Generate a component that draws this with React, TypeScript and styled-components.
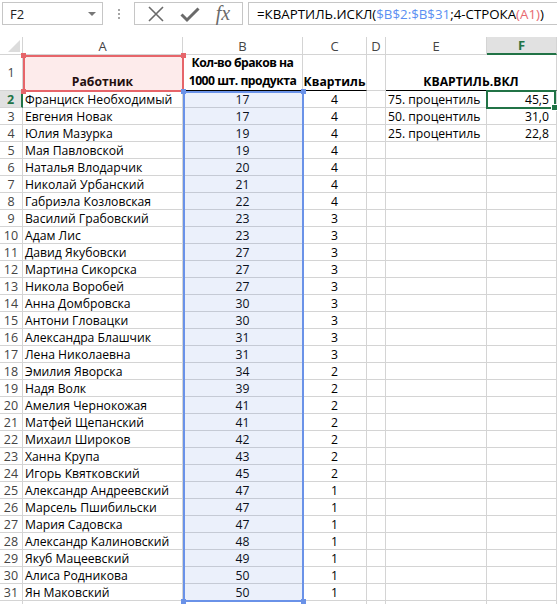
import styled, { createGlobalStyle } from "styled-components";

const GlobalStyle = createGlobalStyle`
  html, body {
    margin: 0;
    padding: 0;
    background: #ffffff;
    overflow: hidden;
  }
  body {
    font-family: "Open Sans", "Liberation Sans", sans-serif;
    color: #000;
  }
`;

const COLS = [23, 160, 120, 64, 19, 101, 70];
const GRID = "#d4d4d4";
const GREEN = "#217346";

type Row = [string, number, number];

const rows: Row[] = [
  ["Франциск Необходимый", 17, 4],
  ["Евгения Новак", 17, 4],
  ["Юлия Мазурка", 19, 4],
  ["Мая Павловской", 19, 4],
  ["Наталья Влодарчик", 20, 4],
  ["Николай Урбанский", 21, 4],
  ["Габриэла Козловская", 22, 4],
  ["Василий Грабовский", 23, 3],
  ["Адам Лис", 23, 3],
  ["Давид Якубовски", 27, 3],
  ["Мартина Сикорска", 27, 3],
  ["Никола Воробей", 27, 3],
  ["Анна Домбровска", 30, 3],
  ["Антони Гловацки", 30, 3],
  ["Александра Блашчик", 31, 3],
  ["Лена Николаевна", 31, 3],
  ["Эмилия Яворска", 34, 2],
  ["Надя Волк", 39, 2],
  ["Амелия Чернокожая", 41, 2],
  ["Матфей Щепанский", 41, 2],
  ["Михаил Широков", 42, 2],
  ["Ханна Крупа", 43, 2],
  ["Игорь Квятковский", 45, 2],
  ["Александр Андреевский", 47, 1],
  ["Марсель Пшибильски", 47, 1],
  ["Мария Садовска", 47, 1],
  ["Александр Калиновский", 48, 1],
  ["Якуб Мацеевский", 49, 1],
  ["Алиса Родникова", 50, 1],
  ["Ян Маковский", 50, 1],
];

const pct: Record<number, [string, string]> = {
  2: ["75. процентиль", "45,5"],
  3: ["50. процентиль", "31,0"],
  4: ["25. процентиль", "22,8"],
};

const Page = styled.div`
  display: flex;
  flex-direction: column;
  width: 557px;
  height: 604px;
  overflow: hidden;
`;

const FormulaBar = styled.div`
  flex-shrink: 0;
  display: flex;
  align-items: flex-start;
  height: 37px;
  padding: 2px 0 0 2px;
  box-sizing: border-box;
`;

const NameBox = styled.div`
  width: 101px;
  height: 23px;
  box-sizing: border-box;
  border: 1px solid #c6c6c6;
  display: flex;
  align-items: center;
  justify-content: space-between;
  padding: 0 6px 0 7px;
  font-size: 13px;
  color: #222;
`;

const DropArrow = styled.span`
  width: 0;
  height: 0;
  border-left: 4px solid transparent;
  border-right: 4px solid transparent;
  border-top: 4px solid #777;
`;

const Grip = styled.div`
  width: 31px;
  height: 23px;
  display: flex;
  flex-direction: column;
  align-items: center;
  justify-content: center;
  gap: 2px;
`;

const Dot = styled.span`
  width: 2px;
  height: 2px;
  background: #a6a6a6;
`;

const ButtonBox = styled.div`
  width: 109px;
  height: 23px;
  box-sizing: border-box;
  border: 1px solid #c6c6c6;
  display: flex;
  align-items: center;
  justify-content: space-around;
  padding: 0 4px;
`;

const Fx = styled.span`
  font-family: "Liberation Serif", "DejaVu Serif", serif;
  font-style: italic;
  font-size: 20px;
  color: #6a6a6a;
  line-height: 1;
  margin-top: -2px;
`;

const FormulaInput = styled.div`
  flex: 1;
  margin-left: 5px;
  height: 23px;
  box-sizing: border-box;
  border: 1px solid #c6c6c6;
  border-right: none;
  display: flex;
  align-items: center;
  padding-left: 8px;
  font-size: 13.3px;
  white-space: nowrap;
  color: #000;
`;

const Ref = styled.span<{ $c: string }>`
  color: ${(p) => p.$c};
`;

const Sheet = styled.div`
  position: relative;
  flex-shrink: 0;
  display: grid;
  grid-template-columns: ${COLS.map((c) => c + "px").join(" ")};
  grid-template-rows: 18px 36px repeat(31, 17px);
`;

const Corner = styled.div`
  border-right: 1px solid ${GRID};
  border-bottom: 1px solid ${GRID};
  position: relative;
  &::after {
    content: "";
    position: absolute;
    right: 2px;
    bottom: 2px;
    width: 0;
    height: 0;
    border-left: 12px solid transparent;
    border-bottom: 12px solid #dcdcdc;
  }
`;

const ColHead = styled.div<{ $sel?: boolean }>`
  box-sizing: border-box;
  display: flex;
  align-items: center;
  justify-content: center;
  font-size: 13px;
  color: ${(p) => (p.$sel ? GREEN : "#444")};
  font-weight: ${(p) => (p.$sel ? 700 : 400)};
  background: ${(p) => (p.$sel ? "#e1e1e1" : "#fff")};
  border-right: 1px solid ${GRID};
  border-bottom: ${(p) => (p.$sel ? `2px solid ${GREEN}` : `1px solid ${GRID}`)};
`;

const RowHead = styled.div<{ $sel?: boolean }>`
  box-sizing: border-box;
  display: flex;
  align-items: center;
  justify-content: center;
  font-size: 12.5px;
  color: ${(p) => (p.$sel ? GREEN : "#444")};
  font-weight: ${(p) => (p.$sel ? 700 : 400)};
  background: ${(p) => (p.$sel ? "#e1e1e1" : "#fff")};
  border-right: ${(p) => (p.$sel ? `2px solid ${GREEN}` : `1px solid ${GRID}`)};
  border-bottom: 1px solid ${GRID};
`;

const Cell = styled.div<{
  $align?: "left" | "center" | "right";
  $bold?: boolean;
  $bottomLine?: boolean;
  $span?: number;
  $bottom?: boolean;
}>`
  box-sizing: border-box;
  display: flex;
  align-items: ${(p) => (p.$bottom ? "flex-end" : "center")};
  justify-content: ${(p) =>
    p.$align === "center" ? "center" : p.$align === "right" ? "flex-end" : "flex-start"};
  text-align: ${(p) => p.$align ?? "left"};
  padding: 0 ${(p) => (p.$align === "right" ? "7px" : "2px")} 0 2px;
  font-size: 12.2px;
  line-height: 17px;
  font-weight: ${(p) => (p.$bold ? 700 : 400)};
  white-space: nowrap;
  grid-column: ${(p) => (p.$span ? `span ${p.$span}` : "auto")};
  border-right: 1px solid ${GRID};
  border-bottom: 1px solid ${(p) => (p.$bottomLine ? "#000" : GRID)};
`;

const TwoLines = styled.div`
  line-height: 18px;
  letter-spacing: -0.5px;
`;

const Highlight = styled.div<{ $c: string; $fill: string }>`
  position: absolute;
  box-sizing: border-box;
  border: 2px solid ${(p) => p.$c};
  background: ${(p) => p.$fill};
  pointer-events: none;
`;

const Handle = styled.span<{ $c: string; $x: "l" | "r"; $y: "t" | "b" }>`
  position: absolute;
  width: 5px;
  height: 5px;
  background: ${(p) => p.$c};
  ${(p) => (p.$x === "l" ? "left: -4px;" : "right: -4px;")}
  ${(p) => (p.$y === "t" ? "top: -4px;" : "bottom: -4px;")}
`;

const Selection = styled.div`
  position: absolute;
  box-sizing: border-box;
  border: 2px solid ${GREEN};
  pointer-events: none;
`;

const FillHandle = styled.span`
  position: absolute;
  right: -4px;
  bottom: -4px;
  width: 5px;
  height: 5px;
  background: ${GREEN};
  border: 1px solid #fff;
`;

const colX = (i: number) => COLS.slice(0, i).reduce((a, b) => a + b, 0);

export default function App() {
  const rowTop = (r: number) => (r === 1 ? 18 : 54 + (r - 2) * 17);

  return (
    <Page>
      <GlobalStyle />
      <FormulaBar>
        <NameBox>
          F2
          <DropArrow />
        </NameBox>
        <Grip>
          <Dot />
          <Dot />
          <Dot />
        </Grip>
        <ButtonBox>
          <svg width="18" height="18" viewBox="0 0 18 18">
            <path d="M2 2 L16 16 M16 2 L2 16" stroke="#6a6a6a" strokeWidth="1.6" fill="none" />
          </svg>
          <svg width="20" height="18" viewBox="0 0 20 18">
            <path d="M1.5 9.5 L7 15 L18.5 3.5" stroke="#6a6a6a" strokeWidth="3" fill="none" />
          </svg>
          <Fx>fx</Fx>
        </ButtonBox>
        <FormulaInput>
          =КВАРТИЛЬ.ИСКЛ(<Ref $c="#5b8ff2">$B$2:$B$31</Ref>;4-СТРОКА
          <Ref $c="#e8686f">(A1)</Ref>)
        </FormulaInput>
      </FormulaBar>

      <Sheet>
        <Corner />
        {["A", "B", "C", "D", "E", "F"].map((c) => (
          <ColHead key={c} $sel={c === "F"}>
            {c}
          </ColHead>
        ))}

        <RowHead>1</RowHead>
        <Cell $align="center" $bold $bottom $bottomLine>
          Работник
        </Cell>
        <Cell $align="center" $bold $bottom $bottomLine>
          <TwoLines>
            Кол-во браков на
            <br />
            1000 шт. продукта
          </TwoLines>
        </Cell>
        <Cell $align="center" $bold $bottom $bottomLine>
          Квартиль
        </Cell>
        <Cell />
        <Cell $align="center" $bold $bottom $bottomLine $span={2}>
          КВАРТИЛЬ.ВКЛ
        </Cell>

        {rows.map(([name, n, q], i) => {
          const r = i + 2;
          const p = pct[r];
          return [
            <RowHead key={`h${r}`} $sel={r === 2}>
              {r}
            </RowHead>,
            <Cell key={`a${r}`}>{name}</Cell>,
            <Cell key={`b${r}`} $align="center">
              {n}
            </Cell>,
            <Cell key={`c${r}`} $align="center">
              {q}
            </Cell>,
            <Cell key={`d${r}`} />,
            <Cell key={`e${r}`}>{p ? p[0] : ""}</Cell>,
            <Cell key={`f${r}`} $align="right">
              {p ? p[1] : ""}
            </Cell>,
          ];
        })}

        <RowHead />
        <Cell />
        <Cell />
        <Cell />
        <Cell />
        <Cell />
        <Cell />

        <Highlight
          $c="#e6656a"
          $fill="rgba(240, 110, 110, 0.14)"
          style={{ left: colX(1), top: rowTop(1), width: COLS[1] + 1, height: 37 }}
        >
          <Handle $c="#e6656a" $x="l" $y="t" />
          <Handle $c="#e6656a" $x="r" $y="t" />
          <Handle $c="#e6656a" $x="l" $y="b" />
          <Handle $c="#e6656a" $x="r" $y="b" />
        </Highlight>
        <Highlight
          $c="#6a92e8"
          $fill="rgba(90, 130, 225, 0.12)"
          style={{ left: colX(2), top: rowTop(2), width: COLS[2] + 1, height: 30 * 17 + 1 }}
        >
          <Handle $c="#6a92e8" $x="l" $y="t" />
          <Handle $c="#6a92e8" $x="r" $y="t" />
          <Handle $c="#6a92e8" $x="l" $y="b" />
          <Handle $c="#6a92e8" $x="r" $y="b" />
        </Highlight>
        <Selection style={{ left: colX(6) - 1, top: rowTop(2) - 1, width: COLS[6], height: 19 }}>
          <FillHandle />
        </Selection>
      </Sheet>
    </Page>
  );
}
